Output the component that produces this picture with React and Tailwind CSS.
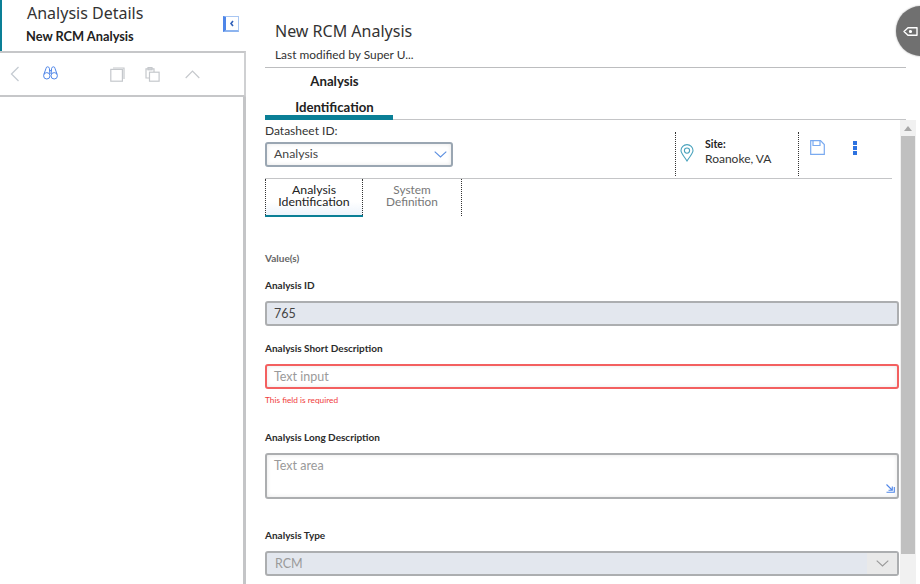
import React from "react";

function Field({ label, children, className = "" }) {
  return (
    <div className={className}>
      <div className="text-[10px] leading-[14px] font-bold text-[#2b2b2b]">{label}</div>
      {children}
    </div>
  );
}

export default function App() {
  return (
    <div className="relative flex h-[584px] w-[920px] overflow-hidden bg-white font-['Lato','Noto_Sans',sans-serif] text-[#2b2b2b]">
      {/* Left panel */}
      <aside className="flex h-full w-[246px] shrink-0 flex-col">
        <div className="relative flex h-[51px] flex-col border-l-[2px] border-[#0a7f96] pl-[25px] pt-[2px]">
          <div className="font-['Noto_Sans',sans-serif] text-[16px] leading-[22px] text-[#333]">Analysis Details</div>
          <div className="ml-[-1px] mt-[4px] text-[12.8px] leading-[17px] font-bold text-[#222]">New RCM Analysis</div>
          <button className="absolute left-[221px] top-[16px] flex h-[16px] w-[16px] items-center justify-center border border-[#a8c6f2] border-b-2 border-b-[#8db4ef] border-l-[3px] border-l-[#4f86e8] bg-white">
            <svg width="6" height="7" viewBox="0 0 6 7"><path d="M4 1 L2 3.5 L4 6" fill="none" stroke="#2f5fb8" strokeWidth="1.6" /></svg>
          </button>
        </div>
        <div className="flex h-[46px] items-center border-y-2 border-r-2 border-[#cfd0d2] border-t-[#c6c7c9] border-b-[#c6c7c9]">
          <svg className="ml-[10px]" width="10" height="16" viewBox="0 0 10 16"><path d="M8.5 1 L1.5 8 L8.5 15" fill="none" stroke="#c5cbd2" strokeWidth="1.3" /></svg>
          <svg className="mb-[3px] ml-[23px]" width="15" height="14" viewBox="0 0 15 14" fill="none" stroke="#4f86e8" strokeWidth="1">
            <circle cx="3.8" cy="9.8" r="3.2" /><circle cx="11.2" cy="9.8" r="3.2" />
            <path d="M.9 8.4 L3 2.4 Q3.2 .8 4.6 .8 Q6 .8 6.4 2.4 L6.9 8 M14.1 8.4 L12 2.4 Q11.8 .8 10.4 .8 Q9 .8 8.6 2.4 L8.1 8 M6.4 4.6 H8.6" />
          </svg>
          <svg className="ml-[52px]" width="15" height="15" viewBox="0 0 15 15" fill="none" stroke="#c5c8cc" strokeWidth="1.2">
            <rect x="0.8" y="2.4" width="11.6" height="11.8" /><path d="M3 1 H14 V12" />
          </svg>
          <svg className="ml-[20px]" width="15" height="15" viewBox="0 0 15 15" fill="none" stroke="#c5c8cc" strokeWidth="1.2">
            <path d="M4 11 H1 V1.8 H9 V5" /><rect x="4.5" y="5.2" width="9.6" height="9" /><rect x="3" y=".6" width="4" height="2.2" />
          </svg>
          <svg className="ml-[25px]" width="15" height="9" viewBox="0 0 15 9"><path d="M.7 8 L7.5 1.2 L14.3 8" fill="none" stroke="#c5c8cc" strokeWidth="1.2" /></svg>
        </div>
        <div className="flex-1 border-r-[3px] border-[#c4c5c7]" />
      </aside>

      {/* Main */}
      <main className="flex min-w-0 flex-1 flex-col pl-[19px]">
        <div className="mr-[14px] h-[68px] border-b border-[#bcbdbf]">
          <div className="pl-[10px] pt-[19px] font-['Noto_Sans',sans-serif] text-[16px] leading-[24px] text-[#333]">New RCM Analysis</div>
          <div className="mt-[3px] pl-[10px] text-[11.9px] leading-[17px] text-[#333]">Last modified by Super U...</div>
        </div>
        <div className="relative mr-[14px] h-[52px] border-b border-[#c4c5c7]">
          <div className="flex w-[128px] flex-col items-center pl-[11px] text-[13.2px] font-bold text-[#222]">
            <div className="mt-[5px] leading-[17px]">Analysis</div>
            <div className="mt-[9px] leading-[17px]">Identification</div>
          </div>
          <div className="absolute bottom-[-1px] left-0 h-[5px] w-[128px] bg-[#0a7f96]" />
        </div>

        <div className="flex min-h-0 flex-1">
          <div className="w-[634px] shrink-0">
            {/* Datasheet row */}
            <div className="mr-[7px] flex h-[59px] border-b border-[#c4c5c7]">
              <div className="w-[188px] pt-[2px]">
                <div className="text-[12px] leading-[17px] text-[#333]">Datasheet ID:</div>
                <div className="mt-[3px] flex h-[25px] items-center justify-between rounded-[3px] border-2 border-[#9aa6b2] pl-[7px] pr-[4px] text-[12.3px] text-[#444] shadow-[inset_0_0_4px_#e5e5e5]">
                  <span>Analysis</span>
                  <svg width="13" height="7" viewBox="0 0 13 7"><path d="M.7 .7 L6.5 6 L12.3 .7" fill="none" stroke="#5c8fe0" strokeWidth="1.1" /></svg>
                </div>
              </div>
              <div className="ml-[222px] mt-[12px] flex h-[44px] w-[124px] items-start border-x border-dotted border-[#333]">
                <svg className="ml-[4px] mt-[12px]" width="14" height="18" viewBox="0 0 14 18" fill="none" stroke="#4aa3bd" strokeWidth="1.1">
                  <path d="M7 17 C4 12 1 9.6 1 6.6 A6 6 0 0 1 13 6.6 C13 9.6 10 12 7 17 Z" /><circle cx="7" cy="6.6" r="2.6" />
                </svg>
                <div className="ml-[11px] mt-[6px]">
                  <div className="text-[10.5px] leading-[13px] font-bold text-[#222]">Site:</div>
                  <div className="text-[12px] leading-[16px] text-[#333]">Roanoke, VA</div>
                </div>
              </div>
              <svg className="ml-[11px] mt-[20px]" width="15" height="15" viewBox="0 0 15 15" fill="none" stroke="#7aaaf0" strokeWidth="1.2">
                <path d="M.7.7 H10.5 L14.3 4.5 V14.3 H.7 Z" /><path d="M3 .7 V5.5 H10 V.7" />
              </svg>
              <div className="ml-[28px] mt-[21px] flex h-[14px] flex-col justify-between">
                <span className="block h-[4px] w-[4px] bg-[#2d72e0]" />
                <span className="block h-[4px] w-[4px] bg-[#2d72e0]" />
                <span className="block h-[4px] w-[4px] bg-[#2d72e0]" />
              </div>
            </div>

            {/* Sub tabs */}
            <div className="flex h-[38px] text-[12.3px] leading-[12px]">
              <div className="relative h-[38px] w-[98px] border-x border-dotted border-[#333] bg-gradient-to-b from-white from-60% to-[#eaf2fb] pt-[5px] text-center text-[#222]">
                Analysis<br />Identification
                <div className="absolute bottom-0 left-[-1px] right-[-1px] h-[2px] bg-[#0a7f96]" />
              </div>
              <div className="h-[37px] w-[99px] border-r border-dotted border-[#333] pt-[5px] text-center text-[11.8px] text-[#777]">
                System<br />Definition
              </div>
            </div>

            {/* Form */}
            <div className="pt-[34px]">
              <div className="text-[10px] leading-[14px] font-bold text-[#666]">Value(s)</div>
              <Field label="Analysis ID" className="mt-[13px]">
                <div className="mt-[9px] flex h-[25px] items-center rounded-[3px] border-2 border-[#acaeb0] bg-[#e3e7ee] pl-[7px] pt-[1px] text-[12.5px] text-[#444]">765</div>
              </Field>
              <Field label="Analysis Short Description" className="mt-[15px]">
                <div className="mt-[9px] flex h-[25px] items-center rounded-[3px] border-2 border-[#f36060] pl-[7px] pt-[1px] text-[12.5px] text-[#9a9a9a] shadow-[inset_0_0_4px_#e5e5e5]">Text input</div>
                <div className="mt-[5px] text-[8.3px] leading-[13px] text-[#f03c3c]">This field is required</div>
              </Field>
              <Field label="Analysis Long Description" className="mt-[23px]">
                <div className="relative mt-[9px] h-[46px] rounded-[3px] border-2 border-[#acaeb0] pl-[7px] pt-[2px] text-[12.5px] leading-[17px] text-[#9a9a9a] shadow-[inset_0_0_4px_#e5e5e5]">
                  Text area
                  <svg className="absolute bottom-[4px] right-[2px]" width="9" height="9" viewBox="0 0 9 9" fill="none" stroke="#4f86e8" strokeWidth="1.1">
                    <path d="M.5 .5 L6 6 M2.5 6.3 H6.3 V2.5 M.5 8.3 H8.3 V3" />
                  </svg>
                </div>
              </Field>
              <Field label="Analysis Type" className="mt-[29px]">
                <div className="mt-[9px] flex h-[25px] items-center justify-between rounded-[3px] border-2 border-[#acaeb0] bg-[#e3e7ee] pl-[8px] text-[12.5px] text-[#9a9a9a]">
                  <span className="mt-[1px]">RCM</span>
                  <span className="flex h-full w-[30px] items-center justify-center bg-[#e9e9e9]">
                    <svg width="13" height="7" viewBox="0 0 13 7"><path d="M.7 .7 L6.5 6 L12.3 .7" fill="none" stroke="#999" strokeWidth="1.1" /></svg>
                  </span>
                </div>
              </Field>
            </div>
          </div>

          {/* Scrollbar */}
          <div className="ml-[1px] flex w-[16px] shrink-0 flex-col bg-[#f1f1f1]">
            <div className="flex h-[16px] items-center justify-center">
              <span className="block h-0 w-0 border-x-[4px] border-b-[5px] border-x-transparent border-b-[#a8a8a8]" />
            </div>
            <div className="mx-[1px] h-[418px] bg-[#c0c0c0]" />
          </div>
        </div>
      </main>

      {/* Floating tab */}
      <div className="absolute left-[896px] top-[6px] flex h-[50px] w-[50px] items-center rounded-full bg-[#707070] pl-[7px] shadow-[0_0_2px_#999]">
        <svg width="15" height="9" viewBox="0 0 15 9" fill="none" stroke="#fff" strokeWidth="1.4" strokeLinejoin="round">
          <path d="M1 4.5 L5 .8 H14 V8.2 H5 Z" /><circle cx="7.5" cy="4.5" r=".9" fill="#fff" />
        </svg>
      </div>
    </div>
  );
}
